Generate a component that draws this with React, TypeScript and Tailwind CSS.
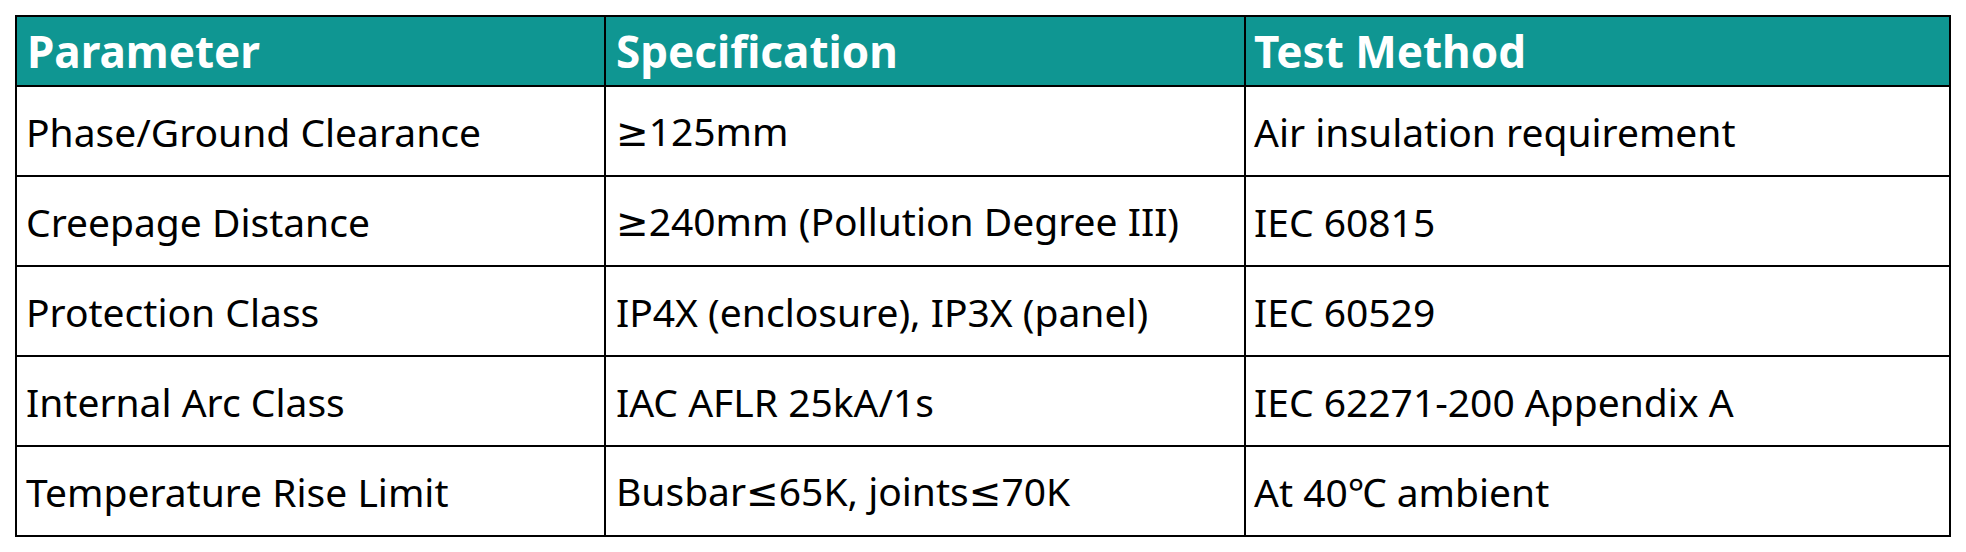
import React from 'react';

interface SpecRow {
  param: string;
  spec: string;
  method: string;
}

const rows: SpecRow[] = [
  { param: 'Phase/Ground Clearance', spec: '≥125mm', method: 'Air insulation requirement' },
  { param: 'Creepage Distance', spec: '≥240mm (Pollution Degree III)', method: 'IEC 60815' },
  { param: 'Protection Class', spec: 'IP4X (enclosure), IP3X (panel)', method: 'IEC 60529' },
  { param: 'Internal Arc Class', spec: 'IAC AFLR 25kA/1s', method: 'IEC 62271-200 Appendix A' },
  { param: 'Temperature Rise Limit', spec: 'Busbar≤65K, joints≤70K', method: 'At 40℃ ambient' },
];

// the CJK fallback draws ≥/≤ as slanted glyphs, so give them a latin font
const withMath = (text: string) =>
  text.split(/([≥≤])/).map((part, i) =>
    part === '≥' || part === '≤' ? (
      <span key={i} className="font-['DejaVu_Sans',sans-serif]">{part}</span>
    ) : (
      <React.Fragment key={i}>{part}</React.Fragment>
    )
  );

export default function App() {
  return (
    <div className="w-[1966px] h-[552px] bg-white pl-[15px] pt-[15px] font-['Noto_Sans','Noto_Sans_CJK_SC',sans-serif]">
      <table className="w-[1936px] table-fixed border-collapse border-2 border-black text-black">
        <colgroup>
          <col className="w-[589px]" />
          <col className="w-[640px]" />
          <col />
        </colgroup>
        <thead>
          <tr className="h-[70px] bg-[#0f9692] text-white">
            <th className="border-2 border-black px-[10px] text-left align-middle text-[44px] font-bold leading-none">Parameter</th>
            <th className="border-2 border-black px-[10px] text-left align-middle text-[44px] font-bold leading-none">Specification</th>
            <th className="border-2 border-black px-[8px] text-left align-middle text-[44px] font-bold leading-none">Test Method</th>
          </tr>
        </thead>
        <tbody>
          {rows.map((r) => (
            <tr key={r.param} className="h-[90px]">
              <td className="border-2 border-black px-[9px] align-middle text-[39px] leading-none whitespace-nowrap">{r.param}</td>
              <td className="border-2 border-black px-[10px] align-middle text-[39px] leading-none whitespace-nowrap">{withMath(r.spec)}</td>
              <td className="border-2 border-black px-[8px] align-middle text-[39px] leading-none whitespace-nowrap">{r.method}</td>
            </tr>
          ))}
        </tbody>
      </table>
    </div>
  );
}
